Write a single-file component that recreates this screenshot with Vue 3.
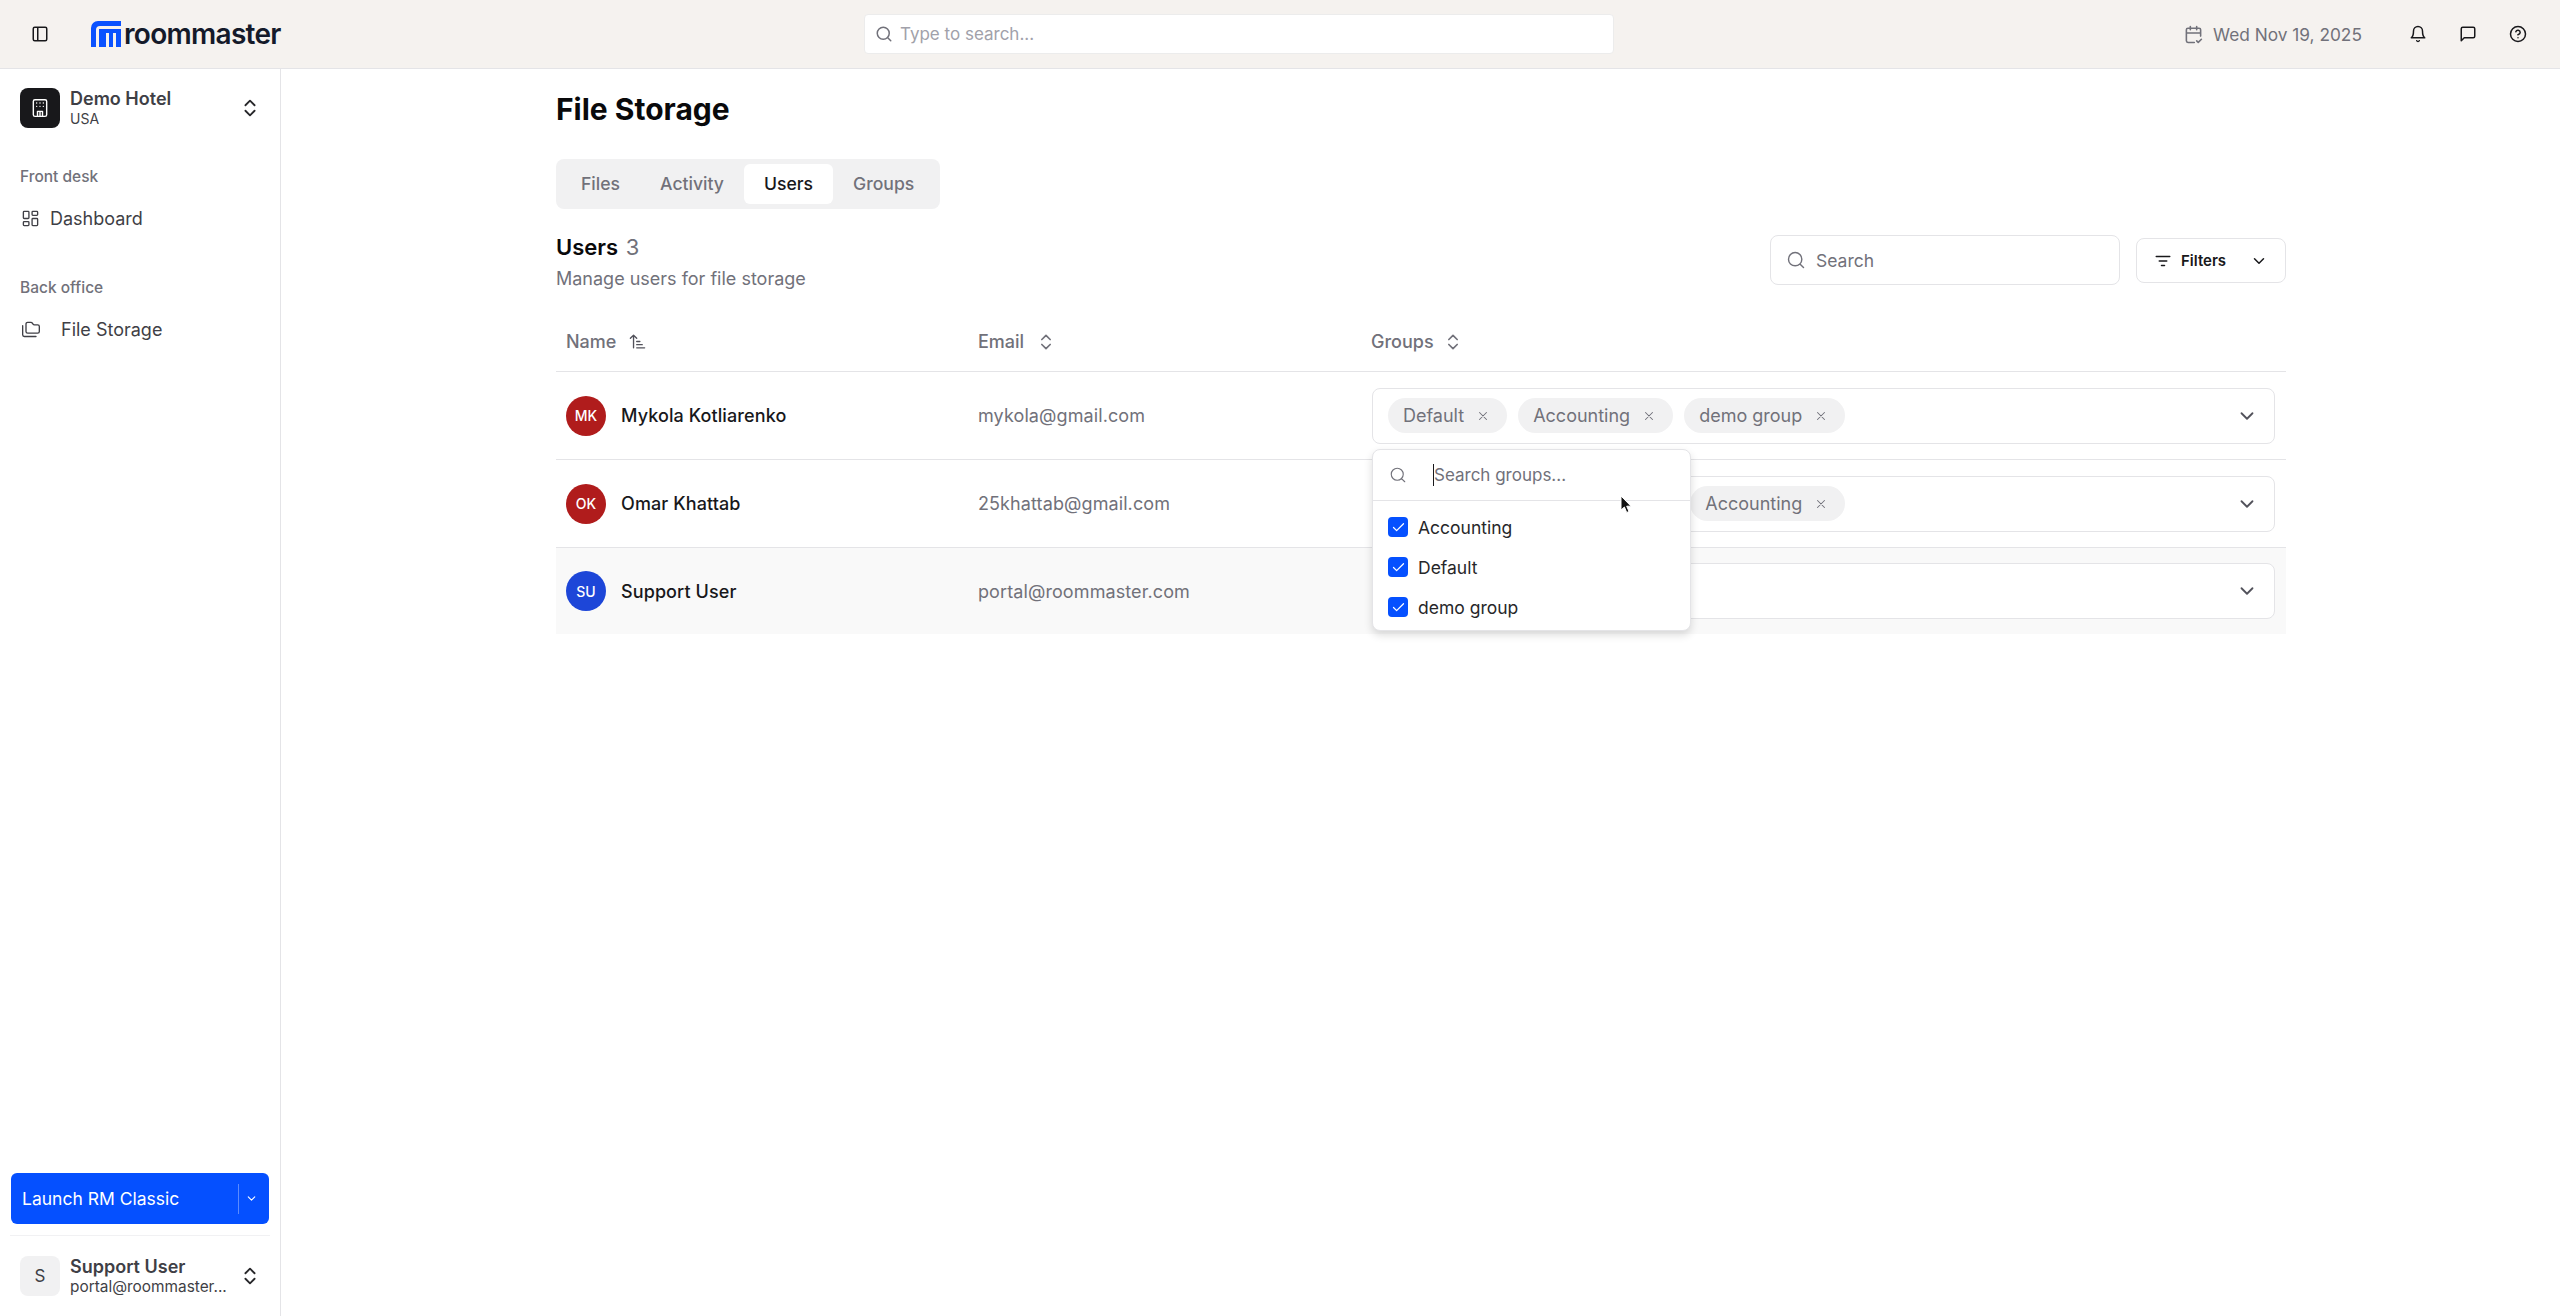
<script setup>
import { h } from 'vue'

const paths = {
  panel: 'M5 3h14a2 2 0 0 1 2 2v14a2 2 0 0 1-2 2H5a2 2 0 0 1-2-2V5a2 2 0 0 1 2-2zM9 3v18',
  updown: 'm7 15 5 5 5-5M7 9l5-5 5 5',
  dash: 'M4 3h5a1 1 0 0 1 1 1v7a1 1 0 0 1-1 1H4a1 1 0 0 1-1-1V4a1 1 0 0 1 1-1zM15 3h5a1 1 0 0 1 1 1v3a1 1 0 0 1-1 1h-5a1 1 0 0 1-1-1V4a1 1 0 0 1 1-1zM15 12h5a1 1 0 0 1 1 1v7a1 1 0 0 1-1 1h-5a1 1 0 0 1-1-1v-7a1 1 0 0 1 1-1zM4 16h5a1 1 0 0 1 1 1v3a1 1 0 0 1-1 1H4a1 1 0 0 1-1-1v-3a1 1 0 0 1 1-1z',
  folders: 'M20 17a2 2 0 0 0 2-2V9a2 2 0 0 0-2-2h-3.9a2 2 0 0 1-1.69-.9l-.81-1.2a2 2 0 0 0-1.67-.9H8a2 2 0 0 0-2 2v9a2 2 0 0 0 2 2ZM2 8v11a2 2 0 0 0 2 2h14',
  hotel: 'M6 2h12a2 2 0 0 1 2 2v16a2 2 0 0 1-2 2H6a2 2 0 0 1-2-2V4a2 2 0 0 1 2-2zM9 22v-6h6v6M12 16v6M8 6h.01M12 6h.01M16 6h.01M8 10h.01M12 10h.01M16 10h.01',
  calendar: 'M8 2v4M16 2v4M21 14V6a2 2 0 0 0-2-2H5a2 2 0 0 0-2 2v14a2 2 0 0 0 2 2h8M3 10h18M16 20l2 2 4-4',
  bell: 'M6 8a6 6 0 0 1 12 0c0 7 3 9 3 9H3s3-2 3-9M10.3 21a1.94 1.94 0 0 0 3.4 0',
  message: 'M21 15a2 2 0 0 1-2 2H7l-4 4V5a2 2 0 0 1 2-2h14a2 2 0 0 1 2 2z',
  help: 'M12 2a10 10 0 1 0 0 20 10 10 0 0 0 0-20zM9.09 9a3 3 0 0 1 5.83 1c0 2-3 3-3 3M12 17h.01',
  search: 'M11 3a8 8 0 1 0 0 16 8 8 0 0 0 0-16zM21 21l-4.3-4.3',
  filter: 'M3 6h18M7 12h10M10 18h4',
  down: 'm6 9 6 6 6-6',
  x: 'M18 6 6 18M6 6l12 12',
  check: 'M20 6 9 17l-5-5',
  sort: 'm3 8 4-4 4 4M7 4v16M11 12h4M11 16h7M11 20h10'
}

const Icon = (props) =>
  h('svg', {
    width: props.size,
    height: props.size,
    viewBox: '0 0 24 24',
    fill: 'none',
    stroke: 'currentColor',
    'stroke-width': props.sw || 2,
    'stroke-linecap': 'round',
    'stroke-linejoin': 'round'
  }, [h('path', { d: paths[props.name] })])
Icon.props = ['name', 'size', 'sw']

const users = [
  { initials: 'MK', name: 'Mykola Kotliarenko', email: 'mykola@gmail.com', color: '#b01c1c', groups: ['Default', 'Accounting', 'demo group'] },
  { initials: 'OK', name: 'Omar Khattab', email: '25khattab@gmail.com', color: '#b01c1c', groups: ['Default', 'demo group', 'Accounting'] },
  { initials: 'SU', name: 'Support User', email: 'portal@roommaster.com', color: '#1d46d8', groups: [], hover: true }
]
const tabs = ['Files', 'Activity', 'Users', 'Groups']
const options = ['Accounting', 'Default', 'demo group']
</script>

<template>
  <div class="app">
    <header class="topbar">
      <Icon class="toggle" name="panel" :size="18" />
      <div class="logo">
        <svg width="30" height="26" viewBox="0 0 30 26">
          <path fill="#0a52ff" d="M0 26V7a7 7 0 0 1 7-7h23v5H9a4 4 0 0 0-4 4v17zM8 8h22v18h-5V12h-3v14h-4V12h-3v14H8z" />
        </svg>
        <span class="wordmark">roommaster</span>
      </div>
      <div class="topsearch">
        <Icon name="search" :size="18" class="ts-icon" />
        <span>Type to search...</span>
      </div>
      <div class="topright">
        <Icon name="calendar" :size="19" class="cal" />
        <span class="date">Wed Nov 19, 2025</span>
        <Icon name="bell" :size="18" class="tool first" />
        <Icon name="message" :size="18" class="tool" />
        <Icon name="help" :size="18" class="tool" />
      </div>
    </header>

    <div class="body">
      <aside class="sidebar">
        <div class="switch">
          <div class="hotel-mark"><Icon name="hotel" :size="20" :sw="1.7" /></div>
          <div class="switch-text">
            <div class="switch-title">Demo Hotel</div>
            <div class="switch-sub">USA</div>
          </div>
          <Icon name="updown" :size="22" class="updown" />
        </div>
        <div class="nav-label first-label">Front desk</div>
        <div class="nav-item dash"><Icon name="dash" :size="19" :sw="1.7" /><span>Dashboard</span></div>
        <div class="nav-label second-label">Back office</div>
        <div class="nav-item storage"><Icon name="folders" :size="20" :sw="1.6" /><span>File Storage</span></div>

        <div class="side-bottom">
          <div class="launch">
            <span>Launch RM Classic</span>
            <i class="launch-sep"></i>
            <Icon name="down" :size="13" class="launch-chev" />
          </div>
          <div class="side-rule"></div>
          <div class="switch user-switch">
            <div class="user-mark">S</div>
            <div class="switch-text">
              <div class="switch-title">Support User</div>
              <div class="switch-sub mail">portal@roommaster...</div>
            </div>
            <Icon name="updown" :size="22" class="updown" />
          </div>
        </div>
      </aside>

      <main class="main">
        <h1>File Storage</h1>
        <div class="tabs">
          <span v-for="t in tabs" :key="t" class="tab" :class="{ active: t === 'Users' }">{{ t }}</span>
        </div>

        <div class="section-head">
          <div>
            <div class="section-title">Users <span>3</span></div>
            <div class="section-sub">Manage users for file storage</div>
          </div>
          <div class="section-actions">
            <div class="search-box"><Icon name="search" :size="20" :sw="1.7" /><span>Search</span></div>
            <div class="filters">
              <Icon name="filter" :size="18" />
              <span>Filters</span>
              <Icon name="down" :size="18" class="filters-chev" />
            </div>
          </div>
        </div>

        <div class="table">
          <div class="row head">
            <div class="cell">Name <Icon name="sort" :size="19" :sw="1.7" class="sort name-sort" /></div>
            <div class="cell">Email <Icon name="updown" :size="20" class="sort email-sort" /></div>
            <div class="cell groups-head">Groups <Icon name="updown" :size="20" class="sort" /></div>
          </div>
          <div v-for="u in users" :key="u.email" class="row" :class="{ hover: u.hover }">
            <div class="cell person">
              <span class="avatar" :style="{ background: u.color }">{{ u.initials }}</span>
              <span class="person-name">{{ u.name }}</span>
            </div>
            <div class="cell email">{{ u.email }}</div>
            <div class="cell group-cell">
              <div class="select">
                <span v-for="g in u.groups" :key="g" class="chip">{{ g }}<Icon name="x" :size="14" :sw="1.8" /></span>
                <Icon name="down" :size="22" class="select-chev" />
              </div>
            </div>
          </div>

          <div class="dropdown">
            <div class="dd-search">
              <Icon name="search" :size="18" :sw="1.5" />
              <span class="caret"></span>
              <span>Search groups...</span>
            </div>
            <div class="options">
              <div v-for="o in options" :key="o" class="option">
                <span class="box"><Icon name="check" :size="15" /></span>
                <span>{{ o }}</span>
              </div>
            </div>
            <svg class="cursor" width="12" height="19" viewBox="0 0 12 19">
              <path d="M1 1v14l3.4-3 2.3 5.5 2.3-1-2.3-5.3H11z" fill="#111" stroke="#fff" stroke-width="1" />
            </svg>
          </div>
        </div>
      </main>
    </div>
  </div>
</template>

<style>
html, body { margin: 0; background: #fff; }
</style>

<style scoped>
.app {
  height: 1316px;
  display: flex;
  flex-direction: column;
  overflow: hidden;
  font-family: Inter, "Noto Sans", sans-serif;
  color: #18181b;
}
.topbar {
  height: 68px;
  flex: none;
  display: flex;
  align-items: center;
  background: #f5f2ef;
  border-bottom: 1px solid #e4e4e7;
  padding-left: 31px;
  position: relative;
}
.toggle { flex: none; }
.logo { display: flex; align-items: center; margin-left: 42px; width: 190px; }
.wordmark {
  font-size: 28px;
  font-weight: 600;
  margin-left: 3px;
  color: #141a2a;
  letter-spacing: -0.7px;
}
.topsearch {
  margin-left: 583px;
  width: 748px;
  height: 38px;
  background: #fff;
  border: 1px solid #ececec;
  border-radius: 4px;
  display: flex;
  align-items: center;
  font-size: 17px;
  color: #a1a1aa;
}
.ts-icon { margin: 0 7px 0 10px; color: #71717a; }
.topright { margin-left: auto; display: flex; align-items: center; padding-right: 33px; }
.cal { color: #71717a; }
.date { margin-left: 10px; font-size: 17.3px; color: #71717a; width: 196px; }
.tool { margin-left: 32px; color: #18181b; }
.tool.first { margin-left: 0; }

.body { flex: 1; display: flex; min-height: 0; }
.sidebar {
  width: 280px;
  flex: none;
  border-right: 1px solid #e4e4e7;
  display: flex;
  flex-direction: column;
  padding-top: 19px;
  box-sizing: content-box;
}
.switch { display: flex; align-items: center; padding: 0 20px; height: 40px; }
.hotel-mark {
  width: 40px; height: 40px; border-radius: 8px; background: #18181b; color: #fff;
  display: flex; align-items: center; justify-content: center; flex: none;
}
.switch-text { margin-left: 10px; flex: 1; min-width: 0; }
.switch-title { font-size: 18px; font-weight: 600; line-height: 21px; color: #3f3f46; }
.switch-sub { font-size: 14px; line-height: 19px; color: #3f3f46; white-space: nowrap; }
.switch-sub.mail { font-size: 15.4px; }
.updown { flex: none; margin-right: -1px; color: #27272a; }
.nav-label { font-size: 15.5px; font-weight: 500; color: #71717a; padding-left: 20px; line-height: 20px; }
.first-label { margin-top: 39px; }
.second-label { margin-top: 44px; }
.nav-item { display: flex; align-items: center; font-size: 18px; color: #3f3f46; padding-left: 21px; height: 32px; }
.dash { margin-top: 15px; }
.dash span { margin-left: 10px; }
.storage { margin-top: 15px; }
.storage span { margin-left: 20px; }
.side-bottom { margin-top: auto; padding-bottom: 20px; }
.launch {
  margin: 0 11px;
  height: 51px;
  background: #0550ff;
  border-radius: 6px;
  color: #fff;
  font-size: 17.5px;
  display: flex;
  align-items: center;
  padding-left: 11px;
}
.launch-sep { width: 1px; height: 30px; background: #5b8bff; margin-left: auto; }
.launch-chev { margin: 0 11px 0 6px; }
.side-rule { height: 1px; background: #f1f1f3; margin: 11px 10px 20px; }
.user-mark {
  width: 40px; height: 40px; border-radius: 8px; background: #f1f1f2; color: #3f3f46;
  display: flex; align-items: center; justify-content: center; font-size: 17px; flex: none;
}

.main { flex: 1; padding-left: 275px; min-width: 0; }
.main > * { width: 1730px; }
h1 { margin: 22px 0 0; font-size: 30px; font-weight: 700; line-height: 36px; color: #09090b; }
.tabs {
  margin-top: 32px;
  width: 384px !important;
  height: 50px;
  box-sizing: border-box;
  padding: 5px;
  background: #f1f1f2;
  border-radius: 8px;
  display: flex;
  align-items: center;
}
.tab { font-size: 17.6px; font-weight: 500; color: #71717a; padding: 0 20px; line-height: 40px; border-radius: 6px; }
.tab.active { background: #fff; color: #18181b; }
.section-head { display: flex; justify-content: space-between; margin-top: 24px; }
.section-title { font-size: 22px; font-weight: 600; line-height: 28px; color: #09090b; }
.section-title span { font-weight: 400; color: #71717a; margin-left: 2px; }
.section-sub { margin-top: 6px; font-size: 18px; color: #71717a; line-height: 24px; }
.section-actions { display: flex; align-items: flex-start; gap: 16px; margin-top: 2px; }
.search-box {
  width: 350px; height: 50px; box-sizing: border-box; border: 1px solid #e4e4e7; border-radius: 8px;
  display: flex; align-items: center; gap: 10px; padding-left: 15px; font-size: 17.5px; color: #71717a;
}
.filters {
  width: 150px; height: 45px; box-sizing: border-box; border: 1px solid #e4e4e7; border-radius: 8px;
  display: flex; align-items: center; padding: 0 17px; gap: 9px; font-size: 15px; font-weight: 600; color: #18181b;
  margin-top: 3px;
}
.filters-chev { margin-left: auto; }

.table { margin-top: 21px; position: relative; }
.row { display: grid; grid-template-columns: 412px 393px 1fr; height: 88px; border-top: 1px solid #e4e4e7; box-sizing: border-box; }
.row.head { height: 59px; border-top: 0; }
.row.hover { background: #f9f9f9; height: 87px; }
.cell { display: flex; align-items: center; padding: 0 10px; min-width: 0; }
.head .cell { font-size: 18px; font-weight: 500; color: #71717a; }
.groups-head { padding-left: 10px; }
.sort { margin-left: 9px; }
.name-sort { margin-left: 12px; color: #52525b; }
.email-sort { margin-left: 12px; }
.avatar {
  width: 40px; height: 40px; border-radius: 50%; color: #fff; font-size: 14px; font-weight: 500;
  display: flex; align-items: center; justify-content: center; flex: none;
}
.person-name { margin-left: 15px; font-size: 18px; letter-spacing: .1px; font-weight: 500; color: #18181b; }
.email { font-size: 18px; letter-spacing: .1px; color: #71717a; padding-left: 10px; }
.group-cell { padding: 0 11px 0 11px; }
.select {
  flex: 1; height: 56px; box-sizing: border-box; background: #fff; border: 1px solid #e4e4e7; border-radius: 8px;
  display: flex; align-items: center; gap: 11px; padding-left: 15px; position: relative;
}
.chip {
  height: 35px; border-radius: 18px; background: #f1f1f2; color: #71717a; font-size: 18px;
  display: inline-flex; align-items: center; padding: 0 17px 0 15px; gap: 12px;
}
.select-chev { position: absolute; right: 16px; top: 16px; color: #52525b; }
.dropdown {
  position: absolute;
  left: 816px;
  top: 137px;
  width: 319px;
  height: 182px;
  box-sizing: border-box;
  background: #fff;
  border: 1px solid #e4e4e7;
  border-radius: 8px;
  box-shadow: 0 4px 8px rgba(0, 0, 0, 0.14);
}
.dd-search {
  height: 51px; box-sizing: border-box; border-bottom: 1px solid #e4e4e7; display: flex; align-items: center;
  padding-left: 16px; font-size: 17px; color: #71717a;
}
.caret { width: 1px; height: 22px; background: #18181b; margin-left: 26px; }
.options { padding-top: 6px; }
.option { height: 40px; display: flex; align-items: center; padding-left: 15px; font-size: 17.5px; color: #27272a; gap: 10px; }
.box {
  width: 20px; height: 20px; border-radius: 4px; background: #0550ff; color: #fff;
  display: flex; align-items: center; justify-content: center;
}
.cursor { position: absolute; left: 247px; top: 45px; }
</style>
